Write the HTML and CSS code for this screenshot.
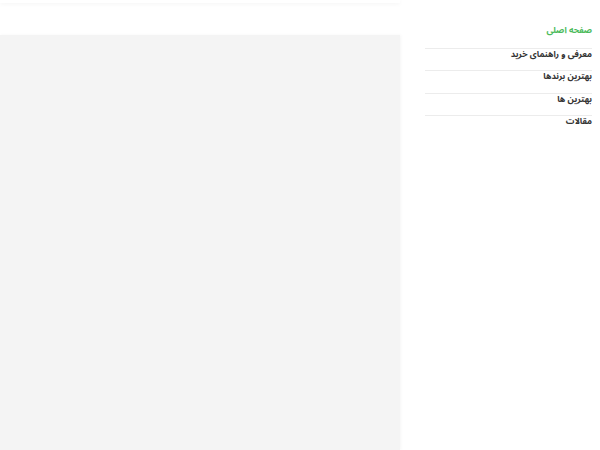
FILE: index.html
```html
<!DOCTYPE html>
<html lang="fa" dir="rtl">
<head>
    <meta charset="UTF-8">
    <meta name="viewport" content="width=device-width, initial-scale=1.0">
    <title>صفحه اصلی</title>
    <link rel="stylesheet" href="styles.css">
</head>
<body>
    <div class="page">
        <aside class="sidebar">
            <ul class="menu">
                <li class="active"><a href="#">صفحه اصلی</a></li>
                <li><a href="#">معرفی و راهنمای خرید</a></li>
                <li><a href="#">بهترین برندها</a></li>
                <li><a href="#">بهترین ها</a></li>
                <li><a href="#">مقالات</a></li>
            </ul>
        </aside>
        <main class="content">
            <div class="top-bar"></div>
            <div class="panel"></div>
        </main>
    </div>
</body>
</html>
```

FILE: styles.css
```css
body, html {
    height: 100%;
    margin: 0;
    font-family: 'Noto Sans Arabic', 'DejaVu Sans Condensed', sans-serif;
    background: #fff;
    overflow: hidden;
}
.page {
    display: grid;
    grid-template-columns: 200px 400px;
    height: 100%;
}
.sidebar {
    padding: 25px 8px 0 25px;
}
.menu {
    list-style: none;
    margin: 0;
    padding: 0;
}
.menu li {
    height: 12px;
    border-top: 1px solid #ececec;
    box-shadow: 0 1px 1px rgba(0,0,0,0.02);
    padding: 0 0 9.5px;
    line-height: 7px;
}
.menu li:first-child {
    border-top: none;
    padding-bottom: 10.5px;
}
.menu li:last-child {
    box-shadow: none;
}
.menu a {
    font-size: 8.5px;
    font-weight: bold;
    color: #333;
    text-decoration: none;
}
.menu .active a {
    color: #4cbb5c;
}
.content {
    display: flex;
    flex-direction: column;
}
.top-bar {
    height: 3px;
    background: #fff;
    box-shadow: 0 1px 4px rgba(0,0,0,0.05);
}
.panel {
    flex: 1;
    margin-top: 32px;
    background: #f4f4f4;
    box-shadow: 1px 0 3px rgba(0,0,0,0.04);
}
```
